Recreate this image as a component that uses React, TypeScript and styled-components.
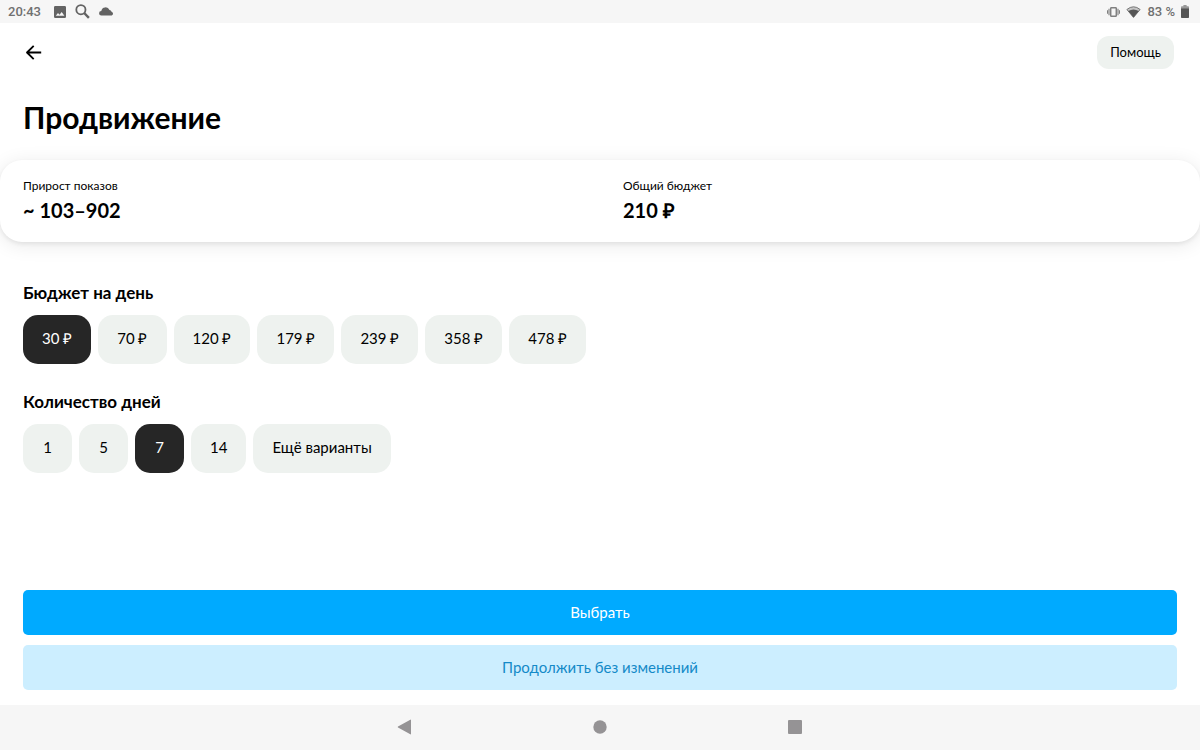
import React, { useState } from "react";
import styled, { createGlobalStyle } from "styled-components";

const GlobalStyle = createGlobalStyle`
  *, *::before, *::after { box-sizing: border-box; }
  body { margin: 0; background: #fff; }
  button { border: 0; padding: 0; background: none; color: inherit; font: inherit; cursor: pointer; }
  svg { display: block; }
`;

const Screen = styled.div`
  display: flex;
  flex-direction: column;
  min-height: 100vh;
  overflow-x: hidden;
  color: #000;
  font-family: Lato, "Open Sans", sans-serif;
`;

const StatusBar = styled.header`
  display: flex;
  align-items: center;
  justify-content: space-between;
  height: 23px;
  padding: 0 11px 0 8px;
  background: #f6f6f6;
  color: #707070;
  font: 500 13px/23px Roboto, sans-serif;
`;

const StatusGroup = styled.div<{ $gap: number }>`
  display: flex;
  align-items: center;
  gap: ${({ $gap }) => $gap}px;
`;

const Clock = styled.time`
  margin-right: 4px;
`;

const TopBar = styled.div`
  display: flex;
  align-items: center;
  justify-content: space-between;
  padding: 13px 26px 0 23px;
`;

const BackButton = styled.button`
  padding: 2px;
`;

const HelpButton = styled.button`
  height: 33px;
  padding: 0 13px 2px;
  border-radius: 12px;
  background: #eef2ef;
  font-size: 13px;
  line-height: 16px;
`;

const Title = styled.h1`
  margin: 30px 23px 0;
  font-size: 30px;
  line-height: 36px;
  font-weight: 700;
`;

const Summary = styled.dl`
  display: grid;
  grid-template-columns: 1fr 1fr;
  margin: 25px 0 0;
  padding: 18px 0 20px;
  border-radius: 22px;
  background: #fff;
  box-shadow: 0 2px 4px rgba(0, 0, 0, 0.07), 0 3px 20px rgba(0, 0, 0, 0.09);
`;

const Metric = styled.div`
  padding: 0 23px;
`;

const MetricLabel = styled.dt`
  font-size: 12px;
  line-height: 16px;
`;

const MetricValue = styled.dd`
  margin: 4px 0 0;
  font-size: 20px;
  line-height: 24px;
  font-weight: 700;
`;

const Options = styled.main`
  display: flex;
  flex: 1;
  flex-direction: column;
  gap: 28px;
  padding: 41px 23px 24px;
`;

const SectionTitle = styled.h2`
  margin: 0 0 12px;
  font-size: 17px;
  line-height: 20px;
  font-weight: 700;
`;

const ChipRow = styled.div`
  display: flex;
  flex-wrap: wrap;
  gap: 7px;
`;

const Chip = styled.button<{ $active?: boolean }>`
  min-width: 49px;
  height: 49px;
  padding: 0 19px 3px;
  border-radius: 15px;
  background: ${({ $active }) => ($active ? "#262626" : "#eef2ef")};
  color: ${({ $active }) => ($active ? "#fff" : "#000")};
  font-size: 15px;
  line-height: 20px;
`;

const Actions = styled.footer`
  display: flex;
  flex-direction: column;
  gap: 10px;
  padding: 0 23px 15px;
`;

const ActionButton = styled.button<{ $primary?: boolean }>`
  height: 45px;
  padding-bottom: 2px;
  border-radius: 5px;
  background: ${({ $primary }) => ($primary ? "#00aaff" : "#cceeff")};
  color: ${({ $primary }) => ($primary ? "#fff" : "#148ac8")};
  font-size: 15px;
  line-height: 20px;
`;

const NavBar = styled.nav`
  display: flex;
  align-items: center;
  justify-content: center;
  gap: 165px;
  height: 45px;
  padding-bottom: 1px;
  background: #f6f6f6;
`;

const NavButton = styled.button`
  padding: 7px;
  color: #959395;
`;

const PictureIcon = () => (
  <svg width="12" height="12" viewBox="0 0 12 12" aria-hidden="true">
    <path
      fill="#636363"
      fillRule="evenodd"
      d="M1.3 0h9.4Q12 0 12 1.3v9.4Q12 12 10.7 12H1.3Q0 12 0 10.7V1.3Q0 0 1.3 0ZM1.8 9.8h8.6L7.7 5.9 5.5 8.7 4 6.9Z"
    />
  </svg>
);

const SearchIcon = () => (
  <svg width="15" height="15" viewBox="0 0 15 15" fill="none" stroke="#636363" aria-hidden="true">
    <circle cx="5.9" cy="5.7" r="4.6" strokeWidth="1.8" />
    <path d="m9.2 9 4.7 4.8" strokeWidth="2.4" />
  </svg>
);

const CloudIcon = () => (
  <svg width="15" height="9" viewBox="0 0 15 9" fill="#636363" aria-hidden="true">
    <path d="M2.3 8.5A2.2 2.2 0 0 1 2.3 4 4.3 4.3 0 0 1 10.5 3 2.9 2.9 0 0 1 12.6 4.7 2 2 0 0 1 12.7 8.5Z" />
  </svg>
);

const VibrateIcon = () => (
  <svg width="13" height="10" viewBox="0 0 13 10" fill="none" stroke="#808080" aria-hidden="true">
    <rect x="3.7" y="0.7" width="5.6" height="8.6" rx="0.8" strokeWidth="1.5" />
    <path d="M2 1.8v6.4M11 1.8v6.4M0.5 3.3v3.4M12.5 3.3v3.4" strokeWidth="1.1" />
  </svg>
);

const WifiIcon = () => (
  <svg width="15" height="12" viewBox="0 0 15 12" aria-hidden="true">
    <path d="M0.9 3.5Q7.5-1.9 14.1 3.5L7.5 11.4Z" fill="#c4c4c4" stroke="#777" strokeWidth="1" />
    <path d="M2.3 5Q7.5 1.8 12.7 5L7.5 11.6Z" fill="#555" />
  </svg>
);

const BatteryIcon = () => (
  <svg width="8" height="13" viewBox="0 0 8 13" aria-hidden="true">
    <path fill="#999" d="M2.4 0h3.2v1.3H7.2q.8 0 .8.8V4H0V2.1q0-.8.8-.8h1.6Z" />
    <path fill="#555" d="M0 3.5h8v8.7q0 .8-.8.8H.8q-.8 0-.8-.8Z" />
  </svg>
);

const BackArrow = () => (
  <svg width="18" height="18" viewBox="0 0 18 18" fill="none" stroke="#000" strokeWidth="1.8" strokeLinejoin="round" aria-hidden="true">
    <path d="M16.2 8.5H2.2M8.7 1.8 2 8.5l6.7 6.7" />
  </svg>
);

const BUDGETS = [30, 70, 120, 179, 239, 358, 478];
const DAYS = [1, 5, 7, 14];

export default function App() {
  const [budget, setBudget] = useState(30);
  const [days, setDays] = useState(7);

  return (
    <Screen>
      <GlobalStyle />
      <StatusBar>
        <StatusGroup $gap={9}>
          <Clock>20:43</Clock>
          <PictureIcon />
          <SearchIcon />
          <CloudIcon />
        </StatusGroup>
        <StatusGroup $gap={6}>
          <VibrateIcon />
          <WifiIcon />
          <span>83 %</span>
          <BatteryIcon />
        </StatusGroup>
      </StatusBar>

      <TopBar>
        <BackButton type="button" aria-label="Назад">
          <BackArrow />
        </BackButton>
        <HelpButton type="button">Помощь</HelpButton>
      </TopBar>

      <Title>Продвижение</Title>

      <Summary>
        <Metric>
          <MetricLabel>Прирост показов</MetricLabel>
          <MetricValue>~ 103–902</MetricValue>
        </Metric>
        <Metric>
          <MetricLabel>Общий бюджет</MetricLabel>
          <MetricValue>210 ₽</MetricValue>
        </Metric>
      </Summary>

      <Options>
        <section aria-labelledby="budget-title">
          <SectionTitle id="budget-title">Бюджет на день</SectionTitle>
          <ChipRow>
            {BUDGETS.map((value) => (
              <Chip
                key={value}
                type="button"
                $active={value === budget}
                aria-pressed={value === budget}
                onClick={() => setBudget(value)}
              >
                {value} ₽
              </Chip>
            ))}
          </ChipRow>
        </section>
        <section aria-labelledby="days-title">
          <SectionTitle id="days-title">Количество дней</SectionTitle>
          <ChipRow>
            {DAYS.map((value) => (
              <Chip
                key={value}
                type="button"
                $active={value === days}
                aria-pressed={value === days}
                onClick={() => setDays(value)}
              >
                {value}
              </Chip>
            ))}
            <Chip type="button">Ещё варианты</Chip>
          </ChipRow>
        </section>
      </Options>

      <Actions>
        <ActionButton type="button" $primary>
          Выбрать
        </ActionButton>
        <ActionButton type="button">Продолжить без изменений</ActionButton>
      </Actions>

      <NavBar aria-label="Системная навигация">
        <NavButton type="button" aria-label="Назад">
          <svg width="16" height="16" viewBox="0 0 16 16" fill="currentColor" aria-hidden="true">
            <path d="M14 1v14q0 .7-.7.3L1 8.4q-.6-.4 0-.8L13.3.7q.7-.4.7.3Z" />
          </svg>
        </NavButton>
        <NavButton type="button" aria-label="Домой">
          <svg width="16" height="16" viewBox="0 0 16 16" fill="currentColor" aria-hidden="true">
            <circle cx="8" cy="8" r="6.7" />
          </svg>
        </NavButton>
        <NavButton type="button" aria-label="Недавние приложения">
          <svg width="16" height="16" viewBox="0 0 16 16" fill="currentColor" aria-hidden="true">
            <rect x="1" y="1" width="14" height="14" rx="1" />
          </svg>
        </NavButton>
      </NavBar>
    </Screen>
  );
}
